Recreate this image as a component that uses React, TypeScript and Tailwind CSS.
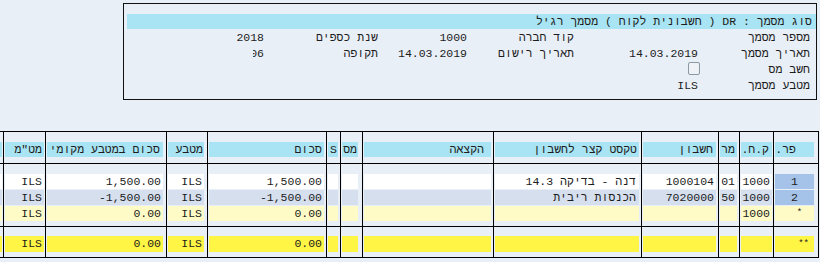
import React from "react";

type Col = {
  w: string;
  fr: string;
  tp: string;
  h?: string;
  rows?: string[];
  total?: string;
  rtl?: boolean;
  partial?: boolean;
  last?: boolean;
  rowNo?: boolean;
};

const cols: Col[] = [
  { w: "w-[3px]", fr: "pr-[1px]", tp: "pr-0", partial: true },
  { w: "w-[42px]", fr: "pr-[1px]", tp: "pr-[2px]", h: 'מט"מ', rows: ["ILS", "ILS", "ILS"], total: "ILS" },
  { w: "w-[121px]", fr: "pr-[3px]", tp: "pr-[3px]", h: "סכום במטבע מקומי", rows: ["1,500.00", "-1,500.00", "0.00"], total: "0.00" },
  { w: "w-[41px]", fr: "pr-[3px]", tp: "pr-[1px]", h: "מטבע", rows: ["ILS", "ILS", "ILS"], total: "ILS" },
  { w: "w-[119px]", fr: "pr-[2px]", tp: "pr-[2px]", h: "סכום", rows: ["1,500.00", "-1,500.00", "0.00"], total: "0.00" },
  { w: "w-[14px]", fr: "pr-[2px]", tp: "pr-[1px]", h: "S" },
  { w: "w-[22px]", fr: "pr-[4px]", tp: "pr-[1px]", h: "מס" },
  { w: "w-[131px]", fr: "pr-[2px]", tp: "pr-[7px]", h: "הקצאה" },
  { w: "w-[148px]", fr: "pr-[2px]", tp: "pr-[2px]", h: "טקסט קצר לחשבון", rows: ["דנה - בדיקה 14.3", "הכנסות ריבית", ""], rtl: true },
  { w: "w-[77px]", fr: "pr-[2px]", tp: "pr-[3px]", h: "חשבון", rows: ["1000104", "7020000", ""] },
  { w: "w-[21px]", fr: "pr-[2px]", tp: "pr-[2px]", h: "מר", rows: ["01", "50", ""] },
  { w: "w-[34px]", fr: "pr-[1px]", tp: "pr-[3px]", h: "ק.ח.", rows: ["1000", "1000", "1000"] },
  { w: "w-[46px]", fr: "pr-[4px]", tp: "pr-[18px]", h: "פר.", rows: ["1", "2", "*"], total: "**", last: true, rowNo: true },
];

const rowFill = ["bg-white", "bg-[#d5dfee]", "bg-[#fffbc6]"];
const rowNoFill = ["bg-[#a5c3e9]", "bg-[#a5c3e9]", "bg-[#fffbc6]"];

function cellBorder(c: Col) {
  if (c.partial) return "";
  return c.last ? "border-l border-r border-black" : "border-l border-black";
}

function HeaderRow() {
  return (
    <div className="flex h-[31px]">
      {cols.map((c, i) => (
        <div key={i} className={`${c.w} ${cellBorder(c)} ${c.fr} ${c.partial ? "" : "pl-[1px]"} pt-[10px] shrink-0`}>
          <div dir="rtl" className={`h-[15px] bg-[#a8e4f3] leading-[15px] whitespace-nowrap overflow-hidden text-right ${c.tp}`}>
            {c.h}
          </div>
        </div>
      ))}
    </div>
  );
}

function BodyRows() {
  return (
    <div className="flex h-[63px] border-t border-black">
      {cols.map((c, i) => (
        <div key={i} className={`${c.w} ${cellBorder(c)} ${c.fr} ${c.partial ? "" : "pl-[1px]"} pt-[10px] shrink-0 flex flex-col gap-[1px]`}>
          {[0, 1, 2].map((r) => {
            const v = c.rows ? c.rows[r] : "";
            const fill = c.rowNo ? rowNoFill[r] : rowFill[r];
            if (c.rowNo) {
              return (
                <div key={r} className={`h-[15px] ${fill} leading-[15px] text-center ${v === "*" ? "text-[9px] pl-[10px]" : ""}`}>
                  {v}
                </div>
              );
            }
            return (
              <div key={r} dir={c.rtl ? "rtl" : "ltr"} className={`h-[15px] ${fill} leading-[15px] whitespace-nowrap overflow-hidden text-right ${c.rtl ? "pr-[3px]" : "pr-[2px]"}`}>
                {v}
              </div>
            );
          })}
        </div>
      ))}
    </div>
  );
}

function TotalRow() {
  return (
    <div className="flex h-[31px] border-t border-black">
      {cols.map((c, i) => (
        <div key={i} className={`${c.w} ${cellBorder(c)} ${c.fr} ${c.partial ? "" : "pl-[1px]"} pt-[9px] shrink-0`}>
          <div className={`h-[16px] bg-[#fff545] leading-[16px] whitespace-nowrap overflow-hidden ${c.rowNo ? "text-[9px] text-right pr-[5px]" : "text-right pr-[2px]"}`}>
            {c.total ?? ""}
          </div>
        </div>
      ))}
    </div>
  );
}

function HeaderBox() {
  return (
    <div className="ml-[123px] mt-[3px] w-[694px] h-[97px] border border-[#111] pt-[10px]">
      <div dir="rtl" className="h-[15px] ml-[3px] bg-[#a8e4f3] leading-[15px] pr-[4px] whitespace-nowrap">
        סוג מסמך : DR ( חשבונית לקוח ) מסמך רגיל
      </div>
      <div className="mt-[1px] grid grid-cols-[140px_114px_89px_107px_124px_112px] auto-rows-[16px] leading-[16px] whitespace-nowrap">
        {/* row: document number */}
        <div className="text-right">2018</div>
        <div dir="rtl" className="text-right">שנת כספים</div>
        <div className="text-right">1000</div>
        <div dir="rtl" className="text-right">קוד חברה</div>
        <div />
        <div dir="rtl" className="text-right">מספר מסמך</div>

        {/* row: dates (period field is clipped on the left, as in SAP) */}
        <div className="flex justify-end">
          <div className="w-[11px] overflow-hidden flex justify-end">
            <span className="shrink-0">06</span>
          </div>
        </div>
        <div dir="rtl" className="text-right">תקופה</div>
        <div className="text-right">14.03.2019</div>
        <div dir="rtl" className="text-right">תאריך רישום</div>
        <div className="text-right">14.03.2019</div>
        <div dir="rtl" className="text-right">תאריך מסמך</div>

        {/* row: tax */}
        <div />
        <div />
        <div />
        <div />
        <div className="flex justify-end items-start">
          <div className="w-[12px] h-[13px] -mr-[2px] border border-[#8e98a3] rounded-[2px] bg-[#eef2f7]" />
        </div>
        <div dir="rtl" className="text-right">חשב מס</div>

        {/* row: currency */}
        <div />
        <div />
        <div />
        <div />
        <div className="text-right">ILS</div>
        <div dir="rtl" className="text-right">מטבע מסמך</div>
      </div>
    </div>
  );
}

export default function App() {
  return (
    <div className="w-[820px] h-[262px] overflow-hidden bg-[#e9eff7] text-[#1c1c1c] text-[11.5px] font-['Liberation_Mono','DejaVu_Sans_Mono',monospace]">
      <HeaderBox />
      <div className="mt-[31px] w-[819px] border-t border-b border-black">
        <HeaderRow />
        <BodyRows />
        <TotalRow />
      </div>
    </div>
  );
}
